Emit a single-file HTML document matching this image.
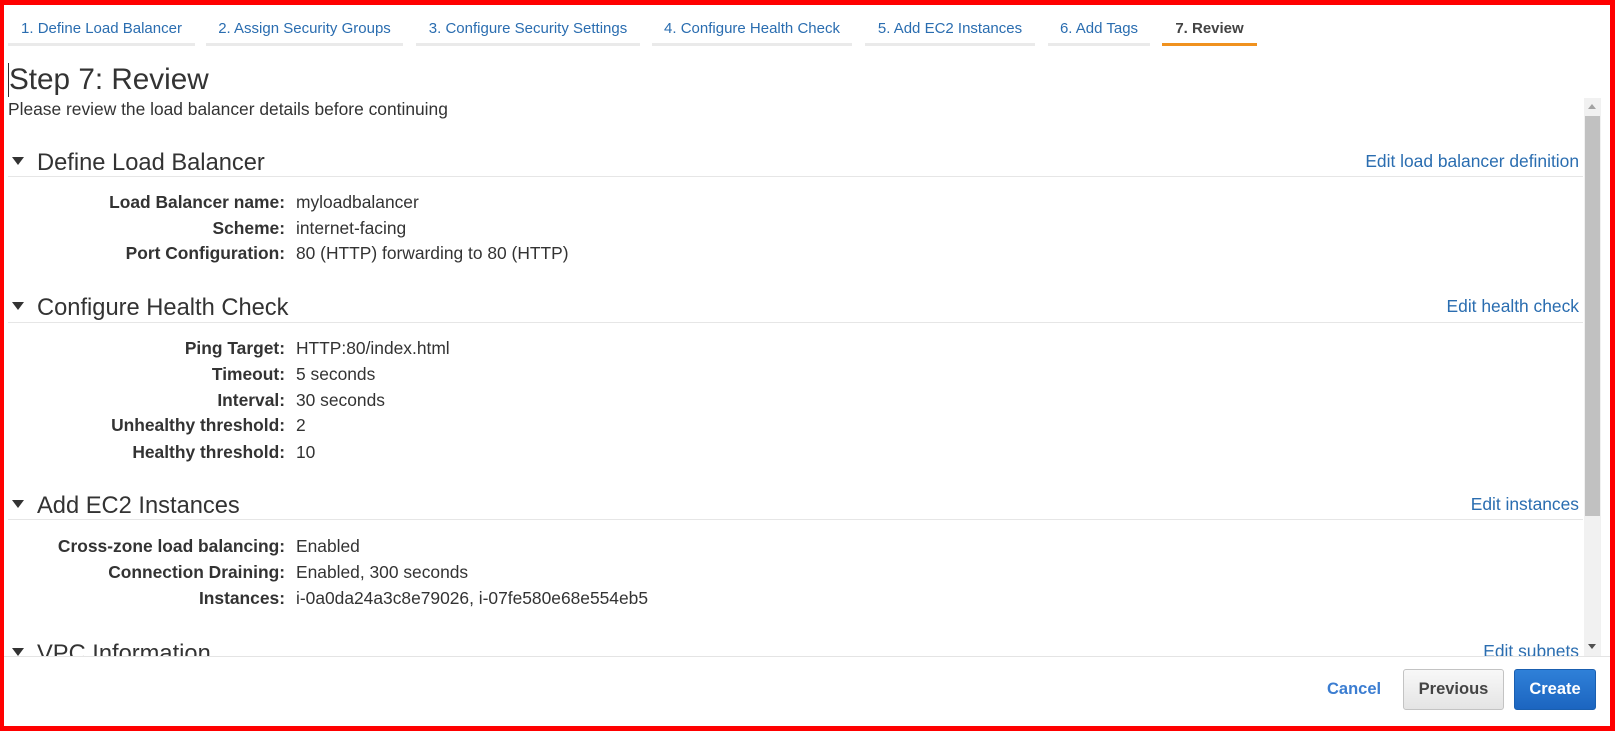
<!DOCTYPE html>
<html><head><meta charset="utf-8"><style>
*{margin:0;padding:0;box-sizing:border-box}
body{width:1615px;height:731px;overflow:hidden;background:#fff;font-family:"Liberation Sans",Arial,sans-serif;color:#333;position:relative}
.frame{position:absolute;left:0;top:0;width:1615px;height:731px;border:5px solid #f00;border-left-width:4px;z-index:10;pointer-events:none}
.tab{position:absolute;top:19px;height:27px;font-size:15px;color:#2a6db0;border-bottom:3px solid #eaeaea;text-align:center;line-height:20px}
.tab.act{color:#444;font-weight:bold;border-bottom-color:#f0921f}
.abs{position:absolute;white-space:nowrap}
h1{position:absolute;left:8px;top:63px;font-size:29.7px;font-weight:normal;color:#333;border-left:1px solid #333;padding-left:0}
.sub{left:8px;top:99px;font-size:17.4px;color:#333}
.sec{left:12px;font-size:23.7px;color:#333}
.sec:before{content:"";display:inline-block;width:0;height:0;border-left:6.5px solid transparent;border-right:6.5px solid transparent;border-top:8px solid #333;margin-right:13px;vertical-align:5px}
.line{position:absolute;left:8px;width:1575px;height:1px;background:#e6e6e6}
.edit{right:36px;font-size:17.4px;color:#2a6db0}
.lab{width:285px;text-align:right;left:0;font-size:17.4px;font-weight:bold;color:#333}
.val{left:296px;font-size:17.4px;color:#333}
</style></head><body>
<div class="tab" style="left:8px;width:187px">1. Define Load Balancer</div>
<div class="tab" style="left:206px;width:197px">2. Assign Security Groups</div>
<div class="tab" style="left:416px;width:224px">3. Configure Security Settings</div>
<div class="tab" style="left:652px;width:200px">4. Configure Health Check</div>
<div class="tab" style="left:865px;width:170px">5. Add EC2 Instances</div>
<div class="tab" style="left:1048px;width:102px">6. Add Tags</div>
<div class="tab act" style="left:1162px;width:95px">7. Review</div>

<h1>Step 7: Review</h1>
<div class="abs sub">Please review the load balancer details before continuing</div>

<div style="position:absolute;left:0;top:98px;width:1615px;height:558px;overflow:hidden">
<div class="abs sec" style="top:52px">Define Load Balancer</div>
<div class="abs edit" style="top:53px">Edit load balancer definition</div>
<div class="line" style="top:78px"></div>
<div class="abs lab" style="top:94px">Load Balancer name:</div><div class="abs val" style="top:94px">myloadbalancer</div>
<div class="abs lab" style="top:120px">Scheme:</div><div class="abs val" style="top:120px">internet-facing</div>
<div class="abs lab" style="top:145px">Port Configuration:</div><div class="abs val" style="top:145px">80 (HTTP) forwarding to 80 (HTTP)</div>

<div class="abs sec" style="top:197px">Configure Health Check</div>
<div class="abs edit" style="top:198px">Edit health check</div>
<div class="line" style="top:224px"></div>
<div class="abs lab" style="top:240px">Ping Target:</div><div class="abs val" style="top:240px">HTTP:80/index.html</div>
<div class="abs lab" style="top:266px">Timeout:</div><div class="abs val" style="top:266px">5 seconds</div>
<div class="abs lab" style="top:292px">Interval:</div><div class="abs val" style="top:292px">30 seconds</div>
<div class="abs lab" style="top:317px">Unhealthy threshold:</div><div class="abs val" style="top:317px">2</div>
<div class="abs lab" style="top:344px">Healthy threshold:</div><div class="abs val" style="top:344px">10</div>

<div class="abs sec" style="top:395px">Add EC2 Instances</div>
<div class="abs edit" style="top:396px">Edit instances</div>
<div class="line" style="top:421px"></div>
<div class="abs lab" style="top:438px">Cross-zone load balancing:</div><div class="abs val" style="top:438px">Enabled</div>
<div class="abs lab" style="top:464px">Connection Draining:</div><div class="abs val" style="top:464px">Enabled, 300 seconds</div>
<div class="abs lab" style="top:490px">Instances:</div><div class="abs val" style="top:490px">i-0a0da24a3c8e79026, i-07fe580e68e554eb5</div>

<div class="abs sec" style="top:543px">VPC Information</div>
<div class="abs edit" style="top:543px">Edit subnets</div>

<div style="position:absolute;left:1584px;top:0;width:17px;height:558px;background:#f1f1f1">
<div style="position:absolute;left:4px;top:6px;border-left:4.5px solid transparent;border-right:4.5px solid transparent;border-bottom:5px solid #a3a3a3"></div>
<div style="position:absolute;left:1px;top:18px;width:15px;height:400px;background:#c1c1c1"></div>
<div style="position:absolute;left:4px;top:546px;border-left:4.5px solid transparent;border-right:4.5px solid transparent;border-top:5px solid #505050"></div>
</div>
</div>
<div class="line" style="top:656px;left:4px;width:1607px;background:#e4e4e4"></div>

<div class="abs" style="left:1327px;top:680px;font-size:16.5px;font-weight:bold;color:#3b7dd1">Cancel</div>
<div class="abs" style="left:1403px;top:669px;width:101px;height:41px;border:1px solid #c3c3c3;border-radius:3px;background:linear-gradient(#f8f8f8,#e4e4e4);font-size:16.5px;font-weight:bold;color:#444;text-align:center;line-height:39px">Previous</div>
<div class="abs" style="left:1514px;top:669px;width:82px;height:41px;border:1px solid #1a5fb0;border-radius:3px;background:linear-gradient(#2f80d8,#1c65c0);font-size:16.5px;font-weight:bold;color:#fff;text-align:center;line-height:39px">Create</div>

<div class="frame"></div>
</body></html>
